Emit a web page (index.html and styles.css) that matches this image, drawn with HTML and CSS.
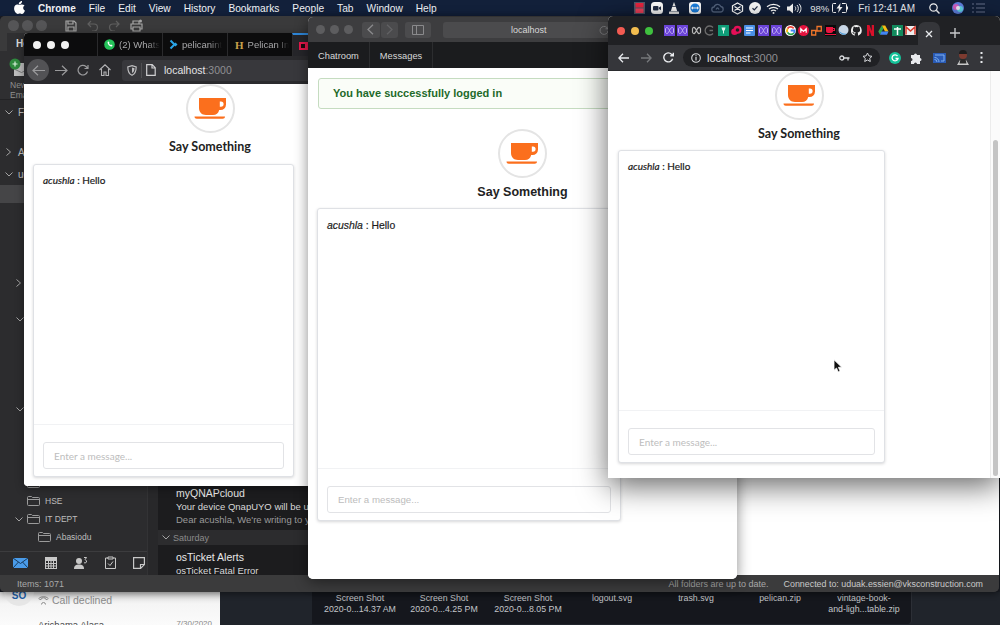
FILE: index.html
```html
<!DOCTYPE html>
<html lang="en">
<head>
<meta charset="utf-8">
<title>Say Something</title>
<link rel="stylesheet" href="styles.css">
</head>
<body>
<svg class="defs" width="0" height="0" aria-hidden="true">
  <symbol id="cup" viewBox="0 0 49 49">
    <path fill="#fb6f1d" d="M13 14h27v6.500a5.500 5.500 0 0 1-5.500 5.500h-1.300c-.8 3.200-3 5-6.200 5H20c-4.200 0-7-2.800-7-7zM33.800 17.500v5.200h1.200a2.600 2.600 0 0 0 0-5.200zM8.500 32.500h30.500c0 1.300-1 2.300-2.300 2.300H10.800c-1.300 0-2.300-1-2.300-2.300z"/>
  </symbol>
  <symbol id="wave" viewBox="0 0 11 11">
    <rect width="11" height="11" fill="#6b44d8"/>
    <path fill="none" stroke="#c9bcf5" stroke-width=".9" d="M1.500 3.500c1.500-2 2.500-1 4 2s2.500 4 4 2M1.500 7.500c1.500 2 2.500 1 4-2s2.500-4 4-2M1.500 3.500v4M9.500 3.500v4"/>
  </symbol>
</svg>

<main class="desktop">

  <!-- Menu bar -->
  <header class="menubar">
    <svg class="apple" width="11" height="13" viewBox="0 0 11 13"><path fill="#fff" d="M8 0c.1 1-.3 1.900-.9 2.500-.6.700-1.500 1.100-2.300 1C4.700 2.600 5.100 1.700 5.700 1.100 6.300.5 7.300 0 8 0zM10.600 4.400C9.700 5 9.200 5.800 9.200 6.900c0 1.200.7 2.100 1.800 2.600-.3.900-.7 1.700-1.300 2.500-.5.700-1 1-1.700 1-.8 0-1.100-.5-2.200-.5s-1.400.5-2.200.5c-.7 0-1.300-.5-1.800-1.200C.8 10.600.1 9 .1 7.400c0-2.500 1.600-3.900 3.200-3.900.9 0 1.600.6 2.200.6.500 0 1.400-.7 2.400-.6.900 0 2 .3 2.700.9z"/></svg>
    <strong class="menu-app">Chrome</strong>
    <span>File</span><span>Edit</span><span>View</span><span>History</span><span>Bookmarks</span><span>People</span><span>Tab</span><span>Window</span><span>Help</span>
    <div class="status-items">
      <svg width="11" height="12" viewBox="0 0 11 12"><rect width="11" height="12" fill="#53596a"/><rect x="1.500" y="1" width="8" height="4.500" fill="#e8243f"/><rect x="1.500" y="6.500" width="8" height="4.500" fill="#f0405a"/></svg>
      <svg width="12" height="12" viewBox="0 0 12 12"><rect width="12" height="12" rx="3.500" fill="#fff"/><rect x="2" y="4" width="5.500" height="4.500" rx="1" fill="#243049"/><path d="M8 5.500l2-1.300v4L8 7z" fill="#243049"/></svg>
      <svg width="12" height="12" viewBox="0 0 12 12"><path d="M6 0l1.500 4h-3z" fill="#e8e8e8"/><path d="M4.200 4.800h3.600l1.400 4.500H2.800z" fill="#fff"/><rect x="1" y="9.500" width="10" height="2.500" rx=".6" fill="#eee"/></svg>
      <svg width="12" height="12" viewBox="0 0 12 12"><rect width="12" height="12" rx="2.500" fill="#fff"/><circle cx="6" cy="6" r="4.600" fill="#1a7fe0"/><path d="M2 6l2-1.700V5.400h4V4.300L10 6 8 7.700V6.600H4v1.100z" fill="#fff"/></svg>
      <svg width="13" height="10" viewBox="0 0 13 10"><path fill="none" stroke="#54647f" stroke-width="1.300" d="M3.500 9a2.500 2.500 0 0 1-.4-5 3.600 3.600 0 0 1 6.800-.5 2.800 2.800 0 0 1 0 5.500zM5 6.500c1-2 2-2 3 0"/></svg>
      <svg width="13" height="13" viewBox="0 0 13 13"><path fill="none" stroke="#fff" stroke-width="1.300" d="M6.500 1l5 2.800v5.400l-5 2.800-5-2.800V3.800zM3.500 4.500l6 4M9.500 4.500l-6 4"/></svg>
      <svg width="12" height="12" viewBox="0 0 12 12"><circle cx="6" cy="6" r="6" fill="#fff"/><path fill="none" stroke="#243049" stroke-width="1.300" d="M3.500 6.300l1.800 1.600 3.200-3.500"/></svg>
      <svg width="15" height="11" viewBox="0 0 15 11"><path fill="none" stroke="#fff" stroke-width="1.200" d="M1 3.800c3.600-3.300 9.400-3.300 13 0M3 6c2.500-2.300 6.500-2.300 9 0M5 8c1.400-1.100 3.600-1.100 5 0"/><circle cx="7.500" cy="10" r="1" fill="#fff"/></svg>
      <svg width="15" height="11" viewBox="0 0 15 11"><path fill="#fff" d="M0 3.500h2.500L6 .5v10l-3.500-3H0z"/><path fill="none" stroke="#fff" d="M8 3.500c1 1 1 3 0 4M10 2c1.800 1.800 1.800 5.200 0 7M12 .8c2.600 2.600 2.600 6.800 0 9.400"/></svg>
      <span class="pct">98%</span>
      <svg width="16" height="10" viewBox="0 0 16 10"><path fill="none" stroke="#fff" d="M4 .5H1.500a1 1 0 0 0-1 1v7a1 1 0 0 0 1 1H4M10 .5h3.500a1 1 0 0 1 1 1v7a1 1 0 0 1-1 1H10"/><path fill="#fff" d="M8.500 0L4.500 5.500h2.500L6 10l4.500-6H8z"/><rect x="15" y="3.500" width="1" height="3" fill="#fff"/></svg>
      <span class="clock">Fri 12:41 AM</span>
      <svg width="11" height="11" viewBox="0 0 11 11"><circle cx="4.500" cy="4.500" r="3.700" fill="none" stroke="#fff" stroke-width="1.200"/><path d="M7.300 7.300L10.500 10.500" stroke="#fff" stroke-width="1.500"/></svg>
      <svg width="12" height="12" viewBox="0 0 12 12"><circle cx="6" cy="6" r="6" fill="#5f7fe0"/><circle cx="4" cy="5" r="3" fill="#d55fc4"/><circle cx="8" cy="7" r="3" fill="#5fd4e6"/><circle cx="6" cy="6" r="2" fill="#f3edf9"/></svg>
      <svg width="13" height="10" viewBox="0 0 13 10"><path stroke="#4b5670" stroke-width="1.400" d="M0 1h2M4 1h9M0 5h2M4 5h9M0 9h2M4 9h9"/></svg>
    </div>
  </header>

  <!-- Background apps below the mail window -->
  <section class="teams">
    <div class="teams-row">
      <span class="teams-avatar">SO</span>
      <span class="teams-call">
        <svg width="11" height="10" viewBox="0 0 11 10"><path fill="none" stroke="#8d8d8d" d="M.8 3.500c2.500-2.400 7-2.400 9.400 0l-1.200 1.300-1.800-1V3a6 6 0 0 0-3.400 0v.8l-1.800 1zM3.500 9.500a2 2 0 1 1 4 0"/></svg>
        Call declined
      </span>
    </div>
    <div class="teams-next"><span>Arichama Alasa</span><span class="teams-date">7/30/2020</span></div>
  </section>
  <section class="finder-back"></section>
  <section class="finder">
    <div class="file">Screen Shot<br>2020-0...14.37 AM</div>
    <div class="file">Screen Shot<br>2020-0...4.25 PM</div>
    <div class="file">Screen Shot<br>2020-0...8.05 PM</div>
    <div class="file">logout.svg</div>
    <div class="file">trash.svg</div>
    <div class="file">pelican.zip</div>
    <div class="file">vintage-book-<br>and-ligh...table.zip</div>
  </section>

  <!-- Outlook -->
  <section class="window outlook">
    <div class="ol-title">
      <div class="dots ol-dots"><i></i><i></i><i></i></div>
      <div class="ol-tools">
        <svg width="12" height="12" viewBox="0 0 12 12"><path fill="none" stroke="#a5a5a5" stroke-width="1.200" d="M1 1h8l2 2v8H1zM3 1v3h5V1M3 11V7h6v4"/></svg>
        <svg width="12" height="11" viewBox="0 0 12 11"><path fill="none" stroke="#5f5f5f" stroke-width="1.200" d="M4 1L1 4l3 3M1 4h6a3.500 3.500 0 0 1 0 7H5"/></svg>
        <svg width="12" height="11" viewBox="0 0 12 11"><path fill="none" stroke="#5f5f5f" stroke-width="1.200" d="M8 1l3 3-3 3M11 4H5a3.500 3.500 0 0 0 0 7h2"/></svg>
        <svg width="13" height="13" viewBox="0 0 13 13"><path fill="none" stroke="#a5a5a5" stroke-width="1.200" d="M3 5V2h6v3M3 10H1V5h11v5h-2M3 8h7v4H3z"/><circle cx="10.500" cy="2" r="1.500" fill="#a5a5a5"/></svg>
      </div>
    </div>
    <div class="ol-tabs"><span class="ol-tab">Home</span></div>
    <div class="ol-ribbon">
      <div class="ol-new">
        <span class="ol-new-icon">
          <svg width="20" height="18" viewBox="0 0 20 18"><rect x="5" y="5" width="15" height="13" fill="#bdbdbd"/><path d="M5 11l7.500 3.500L20 11" fill="none" stroke="#7a7a7a"/><circle cx="6" cy="6" r="5.500" fill="#2f8a3e"/><path d="M6 3.500v5M3.500 6h5" stroke="#d9f0dd" stroke-width="1.200"/></svg>
        </span>
        <span>New<br>Email</span>
      </div>
    </div>
    <div class="ol-body">
      <nav class="ol-side">
        <div class="ol-tree">
          <div class="tree-row tree-fav"><svg class="chev" width="8" height="5" viewBox="0 0 8 5"><path d="M.5.500l3.500 3.500L7.500.500"/></svg>Favorites</div>
          <div class="tree-row tree-acc"><svg class="chev" width="5" height="8" viewBox="0 0 5 8"><path d="M.5.500L4.500 4 .5 7.500"/></svg>All</div>
          <div class="tree-row tree-usr"><svg class="chev" width="8" height="5" viewBox="0 0 8 5"><path d="M.5.500l3.500 3.500L7.500.500"/></svg>uduak</div>
          <div class="tree-row tree-sel"></div>
          <div class="tree-row tree-sub tree-m1"><svg class="chev" width="5" height="8" viewBox="0 0 5 8"><path d="M.5.500L4.500 4 .5 7.500"/></svg></div>
          <div class="tree-row tree-sub tree-m2"><svg class="chev" width="8" height="5" viewBox="0 0 8 5"><path d="M.5.500l3.500 3.500L7.500.500"/></svg></div>
          <div class="tree-row tree-sub tree-m3"><svg class="chev" width="8" height="5" viewBox="0 0 8 5"><path d="M.5.500l3.500 3.500L7.500.500"/></svg></div>
          <div class="tree-bottom">
            <div class="tree-folder tree-hse"><svg width="13" height="12" viewBox="0 0 13 12"><path fill="none" stroke="#9b9b9b" d="M.5 2.500a1 1 0 0 1 1-1h3l1 1h6a1 1 0 0 1 1 1v6a1 1 0 0 1-1 1h-10a1 1 0 0 1-1-1zM.5 4.500h12"/></svg></div>
            <div class="tree-folder tree-hse"><svg width="13" height="12" viewBox="0 0 13 12"><path fill="none" stroke="#9b9b9b" d="M.5 2.500a1 1 0 0 1 1-1h3l1 1h6a1 1 0 0 1 1 1v6a1 1 0 0 1-1 1h-10a1 1 0 0 1-1-1zM.5 4.500h12"/></svg>HSE</div>
            <div class="tree-folder tree-it"><svg class="chev" width="8" height="5" viewBox="0 0 8 5"><path d="M.5.500l3.500 3.500L7.500.500"/></svg><svg width="13" height="12" viewBox="0 0 13 12"><path fill="none" stroke="#9b9b9b" d="M.5 2.500a1 1 0 0 1 1-1h3l1 1h6a1 1 0 0 1 1 1v6a1 1 0 0 1-1 1h-10a1 1 0 0 1-1-1zM.5 4.500h12"/></svg>IT DEPT</div>
            <div class="tree-folder tree-ab"><svg width="13" height="12" viewBox="0 0 13 12"><path fill="none" stroke="#9b9b9b" d="M.5 2.500a1 1 0 0 1 1-1h3l1 1h6a1 1 0 0 1 1 1v6a1 1 0 0 1-1 1h-10a1 1 0 0 1-1-1zM.5 4.500h12"/></svg>Abasiodu</div>
          </div>
        </div>
        <div class="ol-nav">
          <svg width="15" height="10" viewBox="0 0 15 10"><rect width="15" height="10" fill="#4a9be8"/><path fill="none" stroke="#173a5e" d="M0 0l7.500 5.500L15 0M0 10l5.500-6M15 10L9.500 4"/></svg>
          <svg width="12" height="12" viewBox="0 0 12 12"><rect x=".5" y=".5" width="11" height="11" fill="none" stroke="#c8c8c8"/><path stroke="#c8c8c8" d="M.5 3.500h11M.5 6.500h11M.5 9h11M3.500 3v8.500M6 3v8.500M8.500 3v8.500"/><rect x=".5" y=".5" width="11" height="2.500" fill="#c8c8c8"/></svg>
          <svg width="14" height="12" viewBox="0 0 14 12"><circle cx="5" cy="4" r="3" fill="#c8c8c8"/><path d="M0 12c0-3.500 2-4.500 5-4.500s5 1 5 4.500z" fill="#c8c8c8"/><path fill="none" stroke="#c8c8c8" d="M10 .5h2.500l-1.300 2 1.300 1.500a1.500 1.500 0 0 1-2.500 1.500"/></svg>
          <svg width="11" height="13" viewBox="0 0 11 13"><path fill="none" stroke="#c8c8c8" d="M3 2H.5v10.500h10V2H8M3 1h5v2H3zM3 7.500l2 2 3-4"/></svg>
          <svg width="12" height="12" viewBox="0 0 12 12"><path fill="none" stroke="#c8c8c8" stroke-width="1.200" d="M.6.600h10.800v7l-3.800 3.800H.6zM11 7.500H7.500V11"/></svg>
        </div>
      </nav>
      <div class="ol-strip"></div>
      <div class="ol-list">
        <div class="mail">
          <strong>myQNAPcloud</strong>
          <span class="mail-sub">Your device QnapUYO will be up</span>
          <span class="mail-pre">Dear acushla, We're writing to you</span>
        </div>
        <div class="mail-day"><svg class="chev" width="8" height="5" viewBox="0 0 8 5"><path d="M.5.500l3.500 3.500L7.500.500"/></svg>Saturday</div>
        <div class="mail">
          <strong>osTicket Alerts</strong>
          <span class="mail-sub">osTicket Fatal Error</span>
        </div>
      </div>
      <div class="ol-read"></div>
    </div>
    <footer class="ol-status">
      <span>Items: 1071</span>
      <span class="ol-status-right">All folders are up to date.</span>
      <span class="ol-status-conn">Connected to: uduak.essien@vksconstruction.com</span>
    </footer>
  </section>

  <!-- Firefox -->
  <section class="window firefox">
    <div class="ff-tabs">
      <div class="ff-dots"><i></i><i></i><i></i></div>
      <div class="ff-tab">
        <svg width="11" height="11" viewBox="0 0 11 11"><circle cx="5.500" cy="5.500" r="5.300" fill="#25c45a"/><path d="M3.500 3c0 2.500 2 4.500 4.500 4.500l.5-1.300-1.500-.7-.6.600-1.500-1.500.6-.6L4.800 2.500z" fill="#fff"/></svg>
        <span class="ff-tab-text">(2) Whats</span>
      </div>
      <div class="ff-tab">
        <svg width="9" height="11" viewBox="0 0 9 11"><path fill="none" stroke="#2aa5e8" stroke-width="2" d="M1.500 1.500L5.500 5.500 1.500 9.500"/><path fill="#2aa5e8" d="M6.500 3.500l2 2-2 2-2-2z"/></svg>
        <span class="ff-tab-text">pelicanint</span>
      </div>
      <div class="ff-tab ff-tab-h">
        <span class="ff-h">H</span>
        <span class="ff-tab-text">Pelican In</span>
      </div>
      <div class="ff-tab ff-tab-active">
        <svg width="10" height="8" viewBox="0 0 10 8"><rect width="10" height="8" fill="#e8184c"/><rect x="2" y="2" width="4" height="4" fill="#1b0b10"/></svg>
      </div>
    </div>
    <div class="ff-bar">
      <span class="ff-back"><svg width="13" height="11" viewBox="0 0 13 11"><path fill="none" stroke="#9a9a9c" stroke-width="1.200" d="M6 .8L1 5.500l5 4.700M1 5.500h12"/></svg></span>
      <svg class="ff-fwd" width="13" height="11" viewBox="0 0 13 11"><path fill="none" stroke="#9a9a9c" stroke-width="1.200" d="M7 .8l5 4.700-5 4.700M12 5.500H0"/></svg>
      <svg width="12" height="12" viewBox="0 0 12 12"><path fill="none" stroke="#9a9a9c" stroke-width="1.200" d="M10.500 7.500A4.800 4.800 0 1 1 9 2.500l2 2M11 1v3.500H7.500"/></svg>
      <svg width="12" height="12" viewBox="0 0 12 12"><path fill="none" stroke="#b4b4b6" stroke-width="1.100" d="M.5 6L6 .8 11.500 6M2.500 5v6.500h2.500V8h2v3.500h2.500V5"/></svg>
      <div class="ff-url">
        <svg width="10" height="11" viewBox="0 0 10 11"><path fill="none" stroke="#bdbdbf" stroke-width="1.200" d="M5 .7l4.200 1.200c0 4-1 6.800-4.200 8.400C1.800 8.700.8 5.900.8 1.900z"/><path fill="#bdbdbf" d="M5 2.500l2.500.7C7.400 5.500 6.800 7 5 8z"/></svg>
        <i class="ff-sep"></i>
        <svg width="10" height="12" viewBox="0 0 10 12"><path fill="none" stroke="#d0d0d2" stroke-width="1.200" d="M.7.700h5.500l3 3v7.600H.7zM6 .7v3.300h3.200"/></svg>
        <span class="url-text url-ff">localhost<em>:3000</em></span>
      </div>
    </div>
    <div class="page">
      <div class="hero">
        <span class="avatar"><svg width="49" height="49"><use href="#cup"/></svg></span>
        <h2>Say Something</h2>
      </div>
      <div class="card">
        <div class="messages"><b>acushla</b> : Hello</div>
        <div class="composer"><input class="field" type="text" placeholder="Enter a message..."></div>
      </div>
    </div>
  </section>

  <!-- Safari -->
  <section class="window safari">
    <div class="sf-title">
      <div class="dots sf-dots"><i></i><i></i><i></i></div>
      <div class="sf-pair">
        <span><svg width="7" height="11" viewBox="0 0 7 11"><path fill="none" stroke="#8a8a8c" stroke-width="1.300" d="M6 .8L1 5.500l5 4.700"/></svg></span>
        <span><svg width="7" height="11" viewBox="0 0 7 11"><path fill="none" stroke="#626264" stroke-width="1.300" d="M1 .8l5 4.700-5 4.700"/></svg></span>
      </div>
      <span class="sf-sidebar"><svg width="12" height="10" viewBox="0 0 12 10"><path fill="none" stroke="#8a8a8c" d="M.5.500h11v9H.5zM4.500.500v9"/></svg></span>
      <div class="sf-address">
        <span>localhost</span>
        <svg width="10" height="10" viewBox="0 0 10 10"><path fill="none" stroke="#7b7b7d" d="M9 6a4 4 0 1 1-1.200-3.500L9 3.500M9.300 1v2.800H6.500"/></svg>
      </div>
    </div>
    <div class="sf-tabs">
      <span>Chatroom</span><span>Messages</span>
    </div>
    <div class="page page-sf">
      <div class="alert">You have successfully logged in</div>
      <div class="hero">
        <span class="avatar"><svg width="49" height="49"><use href="#cup"/></svg></span>
        <h2>Say Something</h2>
      </div>
      <div class="card">
        <div class="messages"><b>acushla</b> : Hello</div>
        <div class="composer"><input class="field" type="text" placeholder="Enter a message..."></div>
      </div>
    </div>
  </section>

  <!-- Chrome -->
  <section class="window chrome">
    <div class="cr-tabs">
      <div class="cr-dots"><i></i><i></i><i></i></div>
      <div class="favs">
        <svg width="11" height="11"><use href="#wave"/></svg>
        <svg width="11" height="11"><use href="#wave"/></svg>
        <svg width="11" height="11" viewBox="0 0 11 11"><path fill="none" stroke="#b5b5b5" stroke-width="1.200" d="M1.500 3.500c1.500-2 2.500-1 4 2s2.500 4 4 2M1.500 7.500c1.500 2 2.500 1 4-2s2.500-4 4-2M1.500 3.500v4M9.500 3.500v4"/></svg>
        <svg width="11" height="11" viewBox="0 0 11 11"><path fill="none" stroke="#6c6c6c" stroke-width="1.300" d="M9 2.500a4.500 4.500 0 1 0 0 6M5.500 5.500L9 5.500"/></svg>
        <svg width="11" height="11" viewBox="0 0 11 11"><rect width="11" height="11" fill="#0f9d78"/><path d="M3.500 2.500h4l-.8 3H6v3H5v-3h-.7z" fill="#d8f5ec"/></svg>
        <svg width="11" height="11" viewBox="0 0 11 11"><circle cx="6.500" cy="4.800" r="4" fill="#e60f57"/><circle cx="3.500" cy="6.800" r="3.300" fill="#e60f57"/><circle cx="6.500" cy="5" r="1.800" fill="#202124"/></svg>
        <svg width="11" height="11" viewBox="0 0 11 11"><rect width="11" height="11" rx="1" fill="#4a90e6"/><path stroke="#fff" stroke-width="1.200" d="M2 3h7M2 5.500h7M2 8h4.500"/></svg>
        <svg width="11" height="11"><use href="#wave"/></svg>
        <svg width="11" height="11"><use href="#wave"/></svg>
        <svg width="11" height="11" viewBox="0 0 11 11"><circle cx="5.500" cy="5.500" r="5.500" fill="#fff"/><path fill="none" stroke="#e8443a" stroke-width="1.800" d="M8.700 3.300a4 4 0 0 0-6.200 .3"/><path fill="none" stroke="#f7bc11" stroke-width="1.800" d="M2.500 3.600a4 4 0 0 0 0 3.800"/><path fill="none" stroke="#2fa84f" stroke-width="1.800" d="M2.500 7.400a4 4 0 0 0 6.400.6"/><path fill="none" stroke="#4285f4" stroke-width="1.800" d="M8.900 8A4 4 0 0 0 9.500 5.500H5.700"/></svg>
        <svg width="11" height="11" viewBox="0 0 11 11"><circle cx="5.500" cy="5.500" r="5.500" fill="#e5123d"/><path fill="none" stroke="#fff" stroke-width="1.200" d="M2.800 7.800V3.600l2.700 2.700 2.700-2.700v4.200"/></svg>
        <svg width="11" height="11" viewBox="0 0 11 11"><path fill="none" stroke="#f0762a" stroke-width="1.300" d="M.7 5.500h4v4.500h-4zM6 1.500h4.300v4.500H6z"/></svg>
        <svg width="11" height="11" viewBox="0 0 11 11"><rect width="11" height="11" fill="#0a0a0a"/><path fill="#e8153f" d="M1 2h7v1h2v3H8c0 1-.8 2-2 2H3c-1.200 0-2-1-2-2zM8 4v1h1V4zM0 9h11v1H0z"/></svg>
        <svg width="11" height="11" viewBox="0 0 11 11"><circle cx="5.500" cy="5" r="5" fill="#c9d7e6"/><path d="M1 6a5 5 0 0 0 8 2.500C6 9 3 8 1 6z" fill="#4d9bd8"/></svg>
        <svg width="11" height="11" viewBox="0 0 11 11"><path fill="#eee" d="M5.500 0a5.500 5.500 0 0 0-1.800 10.700V8.800c-1.500.3-1.900-.7-1.900-.7-.3-.6-.6-.8-.6-.8h1c.5.100.8.600.8.600.5.800 1.200.6 1.500.4l.4-.8C3 7.300 1.900 6.500 1.900 4.700c0-.7.300-1.200.6-1.600 0-.2-.2-.8.100-1.500.6 0 1.300.4 1.500.6a6 6 0 0 1 2.800 0c.2-.2.900-.6 1.500-.6.300.7.100 1.300.1 1.500.3.400.6.900.6 1.600 0 1.800-1.100 2.600-2.500 2.800l.4.900v2.300A5.500 5.500 0 0 0 5.500 0z"/></svg>
        <svg width="11" height="11" viewBox="0 0 11 11"><path fill="#d8102a" d="M2 0h2.500l2.200 6V0H9v11H6.500L4.300 5v6H2z"/></svg>
        <svg width="11" height="11" viewBox="0 0 11 11"><path fill="#f7bc11" d="M3.700 .5h3.500l3.300 6H7z"/><path fill="#2fa84f" d="M3.700 .5L.3 6.500 2 9.800l3.500-6.200z"/><path fill="#4285f4" d="M2 9.800h7l1.500-3.300h-7z"/></svg>
        <svg width="11" height="11" viewBox="0 0 11 11"><rect width="11" height="11" fill="#128a5d"/><path stroke="#fff" stroke-width="1.500" d="M5.500 2v8M2 4h7"/></svg>
        <svg width="11" height="11" viewBox="0 0 11 11"><rect y="1" width="11" height="9" rx="1" fill="#eee"/><path fill="none" stroke="#d8392b" stroke-width="1.500" d="M1 9.500V2l4.500 4L10 2v7.500"/></svg>
      </div>
      <div class="cr-tab"><svg width="8" height="8" viewBox="0 0 8 8"><path stroke="#e8eaed" stroke-width="1.300" d="M1 1l6 6M7 1L1 7"/></svg></div>
      <svg class="cr-plus" width="10" height="10" viewBox="0 0 10 10"><path stroke="#c7c9cc" stroke-width="1.400" d="M5 0v10M0 5h10"/></svg>
    </div>
    <div class="cr-bar">
      <svg class="cr-back" width="11" height="10" viewBox="0 0 11 10"><path fill="none" stroke="#e8eaed" stroke-width="1.300" d="M5 .7L.9 5 5 9.300M1 5h10"/></svg>
      <svg width="11" height="10" viewBox="0 0 11 10"><path fill="none" stroke="#76787b" stroke-width="1.300" d="M6 .7L10.100 5 6 9.300M10 5H0"/></svg>
      <svg width="11" height="11" viewBox="0 0 11 11"><path fill="none" stroke="#e8eaed" stroke-width="1.400" d="M9.600 6.800A4.500 4.500 0 1 1 8.500 2.200L10 3.500M10.300 .8v3H7.300"/></svg>
      <div class="cr-omni">
        <svg width="10" height="10" viewBox="0 0 10 10"><circle cx="5" cy="5" r="4.300" fill="none" stroke="#d5d7da" stroke-width="1.100"/><path stroke="#d5d7da" stroke-width="1.200" d="M5 4v3.500M5 2.300v1"/></svg>
        <span class="url-text url-cr">localhost<em>:3000</em></span>
        <svg class="cr-key" width="11" height="6" viewBox="0 0 11 6"><circle cx="2.800" cy="3" r="2" fill="none" stroke="#d5d7da" stroke-width="1.300"/><path stroke="#d5d7da" stroke-width="1.300" d="M5 3h5.500M9 3v2.500"/></svg>
        <svg width="11" height="11" viewBox="0 0 11 11"><path fill="none" stroke="#d5d7da" d="M5.500 1l1.400 2.900 3.100.4-2.300 2.100.6 3.100-2.800-1.500-2.800 1.500.6-3.100L1 4.300l3.100-.4z"/></svg>
      </div>
      <svg width="12" height="12" viewBox="0 0 12 12"><circle cx="6" cy="6" r="6" fill="#15c39a"/><path fill="none" stroke="#fff" stroke-width="1.300" d="M8.500 4A3 3 0 1 0 9 6.500H6.500"/></svg>
      <svg width="12" height="12" viewBox="0 0 12 12"><path fill="#e8eaed" d="M0 3h3a1.500 1.500 0 0 1 3 0h3v3a1.500 1.500 0 0 1 0 3v3H6a1.500 1.500 0 0 0-3 0H0V9a1.500 1.500 0 0 0 0-3z"/></svg>
      <svg width="13" height="10" viewBox="0 0 13 10"><rect width="13" height="10" fill="#2a5bb5"/><path fill="none" stroke="#7fb0ee" d="M1.500 4.500a4.500 4.500 0 0 1 4.500 4.500M1.500 6.500a2.500 2.500 0 0 1 2.500 2.500M2 2h9v6H8"/></svg>
      <svg class="cr-avatar" width="14" height="16" viewBox="0 0 14 16"><path d="M1 15l3-5h6l3 5z" fill="#c9c9c9"/><path d="M4.500 9h5l1 4.500h-7z" fill="#2a2a2a"/><circle cx="7" cy="5" r="4" fill="#7d3b30"/><path d="M3 4a4 4 0 0 1 8 0z" fill="#1c1c1c"/></svg>
      <svg class="cr-more" width="3" height="11" viewBox="0 0 3 11"><path stroke="#e8eaed" stroke-width="2" stroke-dasharray="2 2.500" d="M1.500 0v11"/></svg>
    </div>
    <div class="cr-content">
      <div class="page page-cr">
        <div class="hero">
          <span class="avatar"><svg width="49" height="49"><use href="#cup"/></svg></span>
          <h2>Say Something</h2>
        </div>
        <div class="card">
          <div class="messages"><b>acushla</b> : Hello</div>
          <div class="composer"><input class="field" type="text" placeholder="Enter a message..."></div>
        </div>
      </div>
      <div class="scrolltrack"><span class="scrollthumb"></span></div>
    </div>
  </section>

  <svg class="cursor" width="10" height="14" viewBox="0 0 10 14"><path d="M1 .8v10.400l2.500-2.200 1.700 3.900 1.900-.8L5.400 8.300l3.300-.1z" fill="#111" stroke="#fff" stroke-width=".8"/></svg>
</main>
</body>
</html>
```
FILE: styles.css
```css
* { box-sizing: border-box; }
html, body { margin: 0; padding: 0; height: 100%; overflow: hidden; }
body { font-family: "Liberation Sans", Arial, sans-serif; background: #1a1d24; }
.defs { position: absolute; }
svg { display: block; flex: none; }
.desktop { position: relative; width: 1000px; height: 625px; overflow: hidden; }

/* menu bar */
.menubar { position: absolute; left: 0; top: 0; width: 1000px; height: 16px; display: flex; align-items: center; gap: 13px; padding: 0 15px 0 14px; background: #12203a; color: #eef0f4; font-size: 10.200px; }
.apple { margin-bottom: 1px; }
.menu-app { font-weight: 700; font-size: 10px; }
.status-items { margin-left: auto; display: flex; align-items: center; }
.status-items > :nth-child(2) { margin-left: 6px; }
.status-items > :nth-child(3) { margin-left: 5px; }
.status-items > :nth-child(4) { margin-left: 9px; }
.status-items > :nth-child(5) { margin-left: 10px; }
.status-items > :nth-child(6) { margin-left: 7px; }
.status-items > :nth-child(7) { margin-left: 5px; }
.status-items > :nth-child(8) { margin-left: 5px; }
.status-items > :nth-child(9) { margin-left: 6px; }
.status-items > :nth-child(10) { margin-left: 8px; }
.status-items > :nth-child(11) { margin-left: 3px; }
.status-items > :nth-child(12) { margin-left: 10px; }
.status-items > :nth-child(13) { margin-left: 14px; }
.status-items > :nth-child(14) { margin-left: 12px; }
.status-items > :nth-child(15) { margin-left: 8px; }
.pct { font-size: 9.500px; }
.clock { font-size: 10px; }

/* background */
.teams { position: absolute; left: 0; top: 592px; width: 220px; height: 33px; background: linear-gradient(#d7d7d7, #f5f5f5 12px, #fbfbfb); overflow: hidden; }
.teams-row { display: flex; height: 26px; }
.teams-avatar { width: 30px; height: 30px; margin: -16px 0 0 4px; padding-top: 14px; border-radius: 50%; background: #e6e6e6; color: #1f5fa8; font-size: 10px; font-weight: 700; text-align: center; }
.teams-call { display: flex; align-items: center; gap: 3px; height: 16px; margin-left: 4px; color: #8a8a8a; font-size: 10.500px; }
.teams-next { display: flex; justify-content: space-between; padding: 1px 8px 0 38px; color: #444; font-size: 9.500px; }
.teams-date { color: #888; font-size: 8px; }
.finder-back { position: absolute; left: 220px; top: 592px; width: 780px; height: 33px; background: #20242b; }
.finder { position: absolute; left: 312px; top: 592px; width: 600px; height: 32px; display: grid; grid-template-columns: repeat(7, 84px); padding: 1px 0 0 6px; background: #15171d; color: #c3c5c9; font-size: 8.800px; line-height: 10.500px; text-align: center; border-radius: 0 0 4px 0; border-right: 1px solid #2c2f36; }

/* windows */
.window { position: absolute; display: flex; flex-direction: column; overflow: hidden; }
.dots { display: flex; }
.dots i { display: block; width: 11px; height: 11px; border-radius: 50%; background: #555557; }

/* outlook */
.outlook { left: 0; top: 16px; width: 999px; height: 576px; border-radius: 5px; background: #2c2c2e; box-shadow: 0 2px 6px rgba(0,0,0,.45); }
.ol-title { display: flex; align-items: center; height: 17px; flex: none; padding: 2px 0 0 8px; background: #3a3a3b; }
.ol-dots { gap: 3px; }
.ol-tools { display: flex; align-items: center; gap: 9.500px; margin-left: 18px; }
.ol-tabs { height: 18px; flex: none; padding-left: 7px; background: #3a3a3b; }
.ol-tab { display: block; width: 60px; height: 18px; padding: 5px 0 0 9px; background: #2f2f31; color: #dcdcdc; font-size: 10px; font-weight: 700; }
.ol-ribbon { height: 49px; flex: none; padding: 7px 0 0 9px; background: #2f2f31; border-bottom: 1px solid #232325; }
.ol-new { display: flex; flex-direction: column; gap: 4px; color: #8f8f8f; font-size: 8.500px; line-height: 10px; }
.ol-new span:last-child { padding-left: 1px; }
.ol-body { flex: 1; min-height: 0; display: flex; }
.ol-side { width: 147px; flex: none; display: flex; flex-direction: column; background: #2c2c2e; }
.ol-tree { flex: 1; display: flex; flex-direction: column; padding-top: 3px; color: #c0c0c0; font-size: 10px; overflow: hidden; }
.chev { fill: none; stroke: #a4a4a4; stroke-width: 1; }
.tree-row { display: flex; align-items: center; gap: 5px; height: 18px; padding-left: 5px; flex: none; }
.tree-acc { margin-top: 22px; padding-left: 6px; gap: 7px; }
.tree-usr { margin-top: 4px; }
.tree-sel { height: 18px; margin-top: 2px; background: #454547; }
.tree-sub { padding-left: 16px; }
.tree-m1 { margin-top: 71px; }
.tree-m2 { margin-top: 18px; }
.tree-m3 { margin-top: 72px; }
.tree-bottom { margin-top: auto; display: flex; flex-direction: column; padding-bottom: 5px; }
.tree-folder { display: flex; align-items: center; gap: 5px; height: 18px; flex: none; color: #bdbdbd; font-size: 8.500px; }
.tree-hse { padding-left: 27px; }
.tree-it { padding-left: 15px; }
.tree-it .chev { margin-right: -1px; }
.tree-ab { padding-left: 38px; }
.ol-nav { height: 24px; flex: none; display: flex; align-items: center; gap: 17px; padding: 0 0 2px 13px; border-top: 1px solid #3c3c3e; background: #2c2c2e; }
.ol-strip { width: 11px; flex: none; background: #28282a; border-left: 1px solid #333335; }
.ol-list { width: 150px; flex: none; display: flex; flex-direction: column; padding-top: 387px; background: #1c1c1e; color: #d8d8d8; overflow: hidden; font-size: 9.500px; }
.mail { display: flex; flex-direction: column; padding-left: 18px; white-space: nowrap; line-height: 13px; flex: none; }
.mail strong { font-size: 10.500px; font-weight: 400; color: #e8e8e8; }
.mail-sub { line-height: 14px; }
.mail-pre { color: #9a9a9a; line-height: 12px; }
.mail-day { display: flex; align-items: center; gap: 3px; height: 15px; margin: 4px 0 6px; padding-left: 4px; flex: none; background: #2c2c2e; color: #8b8b8b; font-size: 9px; }
.ol-read { flex: 1; background: #fff; }
.ol-status { height: 17px; flex: none; display: flex; align-items: center; padding: 0 16px 0 17px; background: #3b3b3c; color: #a8a8a8; font-size: 9px; }
.ol-status-right { margin-left: auto; }
.ol-status-conn { margin-left: 15px; color: #c9c9c9; font-size: 8.900px; }

/* chat app shared */
.page { flex: 1; min-height: 0; display: flex; flex-direction: column; padding: 0 9px; background: #fff; color: #222; font-family: Lato, sans-serif; overflow: hidden; }
.hero { display: flex; flex-direction: column; align-items: center; flex: none; }
.avatar { display: block; width: 49px; height: 49px; border: 2px solid #e4e4e4; border-radius: 50%; }
.avatar svg { margin: -2px; }
.hero h2 { margin: 5px 0 8px; font-size: 12.500px; line-height: 18px; font-weight: 700; color: #222; }
.card { flex: none; width: 261px; height: 313px; display: flex; flex-direction: column; border: 1px solid #dfe1e5; border-radius: 3px; background: #fff; box-shadow: 0 1px 3px rgba(34,36,38,.18); }
.messages { flex: 1; padding: 8px 9px; font-size: 10px; line-height: 14px; color: #1c1c1c; -webkit-text-stroke: .2px #1c1c1c; }
.messages b { font-style: italic; font-weight: 400; }
.composer { flex: none; height: 52px; padding: 17px 9px 0; border-top: 1px solid #f1f2f4; }
.field { display: block; width: 100%; height: 27px; padding: 0 10px; border: 1px solid #e2e3e6; border-radius: 3px; background: #fff; font: inherit; font-size: 10px; outline: none; }
.field::placeholder { color: #bdbdbd; opacity: 1; }

/* firefox */
.firefox { left: 24px; top: 33px; width: 372px; height: 453px; border-radius: 4px; background: #fff; box-shadow: 0 2px 8px rgba(0,0,0,.4); }
.ff-tabs { display: flex; height: 23px; flex: none; background: #0c0c0d; }
.ff-dots { display: flex; align-items: center; gap: 6px; width: 73px; padding-left: 9px; }
.ff-dots i { display: block; width: 8px; height: 8px; border-radius: 50%; background: #f2f2f2; }
.ff-tab { display: flex; align-items: center; gap: 4px; width: 65px; padding-left: 6px; border-left: 1px solid #2a2a2c; color: #a8a8aa; font-size: 9.500px; white-space: nowrap; }
.ff-tab-text { display: block; -webkit-mask-image: linear-gradient(90deg, #000 70%, transparent); mask-image: linear-gradient(90deg, #000 70%, transparent); }
.ff-tab-h { gap: 4px; padding-left: 7px; }
.ff-h { color: #c9a24b; font: 700 11px "Liberation Serif", serif; }
.ff-tab-active { width: 80px; padding-left: 6px; background: #26262a; border-top: 2px solid #2e86d8; }
.ff-bar { display: flex; align-items: center; gap: 9.500px; height: 28px; flex: none; padding-left: 3px; background: #2b2b2e; }
.ff-back { display: flex; align-items: center; justify-content: center; width: 22px; height: 22px; border-radius: 50%; background: #525255; }
.ff-fwd { margin-left: -4px; }
.ff-url { display: flex; align-items: center; gap: 4px; width: 240px; height: 21px; margin-left: 2px; padding-left: 5px; border-radius: 3px; background: #38383c; }
.ff-sep { display: block; width: 1px; height: 15px; background: #505053; }
.url-text { color: #e4e4e6; font-size: 10.500px; }
.url-text em { font-style: normal; color: #8f8f92; }
.url-ff { margin-left: 4px; }

/* safari */
.safari { left: 308px; top: 17px; width: 429px; height: 562px; border-radius: 5px; background: #fff; box-shadow: 0 3px 14px rgba(0,0,0,.45); }
.sf-title { display: flex; align-items: center; height: 25px; flex: none; padding-left: 8px; background: #3d3d3f; }
.sf-dots { gap: 5px; width: 46px; }
.sf-dots i { width: 9px; height: 9px; background: #5d5d5f; }
.sf-pair { display: flex; gap: 1px; width: 36px; height: 16px; }
.sf-pair span { display: flex; align-items: center; justify-content: center; flex: 1; background: #4b4b4d; border-radius: 3px; }
.sf-sidebar { display: flex; align-items: center; justify-content: center; width: 26px; height: 16px; margin-left: 7px; background: #4b4b4d; border-radius: 3px; }
.sf-address { display: flex; align-items: center; justify-content: space-between; width: 168px; height: 16px; margin-left: 12px; padding: 0 2px 0 68px; background: #4b4b4d; border-radius: 3px; color: #d8d8d8; font-size: 9px; }
.sf-tabs { display: flex; height: 26px; flex: none; background: #1b1c1e; color: #d8d8d8; font-size: 9.300px; }
.sf-tabs span { display: flex; align-items: center; padding: 1px 10px 0; border-right: 1px solid #2c2d2f; }
.page-sf { font-family: "Liberation Sans", Arial, sans-serif; }
.page-sf .alert { flex: none; width: 411px; height: 31px; margin: 10px 0 20px 1px; padding: 0 0 1px 14px; display: flex; align-items: center; border: 1px solid #c5dcc0; border-radius: 3px; background: #fafdf8; color: #1e6a2a; font-size: 11px; font-weight: 700; }
.page-sf .hero h2 { margin: 5px 0 7px; }
.page-sf .messages { padding-top: 10px; font-size: 10.400px; }
.page-sf .field { font-size: 9.700px; }
.page-sf .card { width: 304px; }

/* chrome */
.chrome { left: 608px; top: 16px; width: 392px; height: 462px; border-radius: 5px 5px 0 0; background: #fff; box-shadow: 0 8px 30px rgba(0,0,0,.6); }
.cr-tabs { display: flex; align-items: flex-end; height: 29px; flex: none; background: #202124; }
.cr-dots { display: flex; align-items: center; align-self: center; gap: 6px; width: 56px; padding-left: 9px; }
.cr-dots i { display: block; width: 8px; height: 8px; border-radius: 50%; background: #f35b52; }
.cr-dots i:nth-child(2) { background: #f3bd4f; }
.cr-dots i:nth-child(3) { background: #3fc13f; }
.favs { display: flex; align-items: center; align-self: center; gap: 2.400px; width: 254px; }
.cr-tab { display: flex; align-items: center; justify-content: center; width: 22px; height: 23px; border-radius: 7px 7px 0 0; background: #35363a; }
.cr-plus { align-self: center; margin: 4px 0 0 10px; }
.cr-bar { display: flex; align-items: center; gap: 11px; height: 26px; flex: none; padding: 0 0 0 10px; background: #35363a; border-bottom: 1px solid #2a2b2e; }
.cr-back { margin-right: 1px; }
.cr-omni { display: flex; align-items: center; width: 197px; height: 19px; margin: 0 -1px 0 -2px; padding: 0 7px 0 8px; border-radius: 10px; background: #202124; }
.url-cr { margin-left: 6px; font-size: 11px; }
.cr-key { margin: 0 12px 0 auto; }
.cr-bar > svg:nth-last-child(-n+5) { margin-left: -1px; }
.cr-avatar { margin-left: -2px; }
.cr-bar > .cr-more { margin-left: 4px; }
.cr-content { flex: 1; min-height: 0; display: flex; }
.page-cr { padding: 0 10px; flex: 1; }
.page-cr .hero h2 { margin-bottom: 7px; }
.page-cr .card { width: 267px; }
.scrolltrack { width: 10px; flex: none; padding: 69px 2px 2px 2px; border-left: 1px solid #ececec; background: #fbfbfb; }
.scrollthumb { display: block; height: 100%; border-radius: 3px; background: #c4c4c4; }

.cursor { position: absolute; left: 833px; top: 359px; }
```
